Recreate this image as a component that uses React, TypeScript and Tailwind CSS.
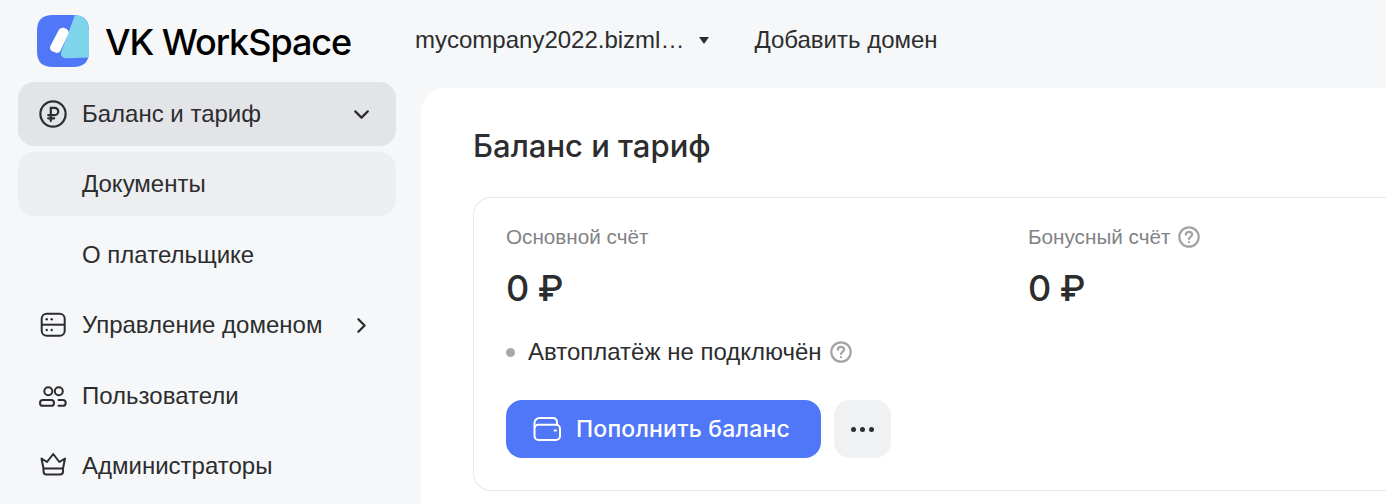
import { ChevronDown, ChevronRight } from "lucide-react";

const QuestionIcon = () => (
  <svg width="22" height="22" viewBox="0 0 22 22" fill="none" stroke="#a3a3a6" strokeWidth="2.2" strokeLinecap="round">
    <circle cx="11" cy="11" r="9.7" />
    <path d="M7.9 8.7c0-1.8 1.3-2.9 3.1-2.9s3.1 1.1 3.1 2.7c0 2.3-3.1 2.3-3.1 4.4" />
    <circle cx="11" cy="16.2" r="0.5" fill="#a3a3a6" strokeWidth="1.2" />
  </svg>
);

const Logo = () => (
  <svg width="52" height="52" viewBox="0 0 52 52" fill="none">
    <path d="M16 0H36C47 0 52 5 52 16V36C52 47 47 52 36 52H16C5 52 0 47 0 36V16C0 5 5 0 16 0Z" fill="#5077f7" />
    <path d="M38 0C47 .5 52 6 52 16V36C52 38 51.8 40 51.4 42.5L29 43.2C25 43.3 22.8 39.6 24.6 36L38 0Z" fill="#7fd6ec" />
    <path d="M21.5 15.5C23 13 25.5 12.2 27.8 13.2L29.5 14C31.5 15 32.2 17.2 31.2 19.2L23.6 35.6C22.7 37.6 20.4 38.4 18.4 37.6L15.2 36.2C13.2 35.2 12.4 33 13.4 31L21.5 15.5Z" fill="#fff" />
  </svg>
);

const RubleIcon = () => (
  <svg width="28" height="28" viewBox="0 0 28 28" fill="none" stroke="#2c2d2e" strokeWidth="2.2">
    <circle cx="14" cy="14" r="12.6" />
    <path d="M11.8 21V7.8h3.8a3.6 3.6 0 0 1 0 7.3H9.2M9.2 18.3h6" strokeLinecap="round" />
  </svg>
);

const DomainIcon = () => (
  <svg width="28" height="28" viewBox="0 0 28 28" fill="none" stroke="#2c2d2e" strokeWidth="2">
    <rect x="2.7" y="2.7" width="23" height="22" rx="5" />
    <path d="M2.7 13.7h23" />
    <g fill="#2c2d2e" stroke="none">
      <circle cx="7.7" cy="8.3" r="1.2" />
      <circle cx="12.7" cy="8.3" r="1.2" />
      <circle cx="7.7" cy="19" r="1.2" />
      <circle cx="12.7" cy="19" r="1.2" />
    </g>
  </svg>
);

const UsersIcon = () => (
  <svg width="30" height="28" viewBox="0 0 30 28" fill="none" stroke="#2c2d2e" strokeWidth="2">
    <circle cx="10.3" cy="9.3" r="4" />
    <circle cx="20.8" cy="9.3" r="4" />
    <rect x="2" y="18" width="14" height="5.8" rx="2.9" />
    <path d="M20.5 18h4.3a2.9 2.9 0 0 1 0 5.8h-4.3" strokeLinecap="round" />
  </svg>
);

const CrownIcon = () => (
  <svg width="28" height="28" viewBox="0 0 28 28" fill="none" stroke="#2c2d2e" strokeWidth="2" strokeLinejoin="round" className="overflow-visible">
    <path d="M2.5 6.5L8 10l6.2-8 6.2 8L26 6.5 24 16.5H4.5L2.5 6.5Z" />
    <path d="M4.5 16.5V19.5a3 3 0 0 0 3 3h13.5a3 3 0 0 0 3-3V16.5" />
  </svg>
);

const WalletIcon = () => (
  <svg width="28" height="28" viewBox="0 0 28 28" fill="none" stroke="#fff" strokeWidth="2">
    <rect x="1.5" y="9.7" width="25.5" height="15.2" rx="4" />
    <path d="M1.5 13V8a5 5 0 0 1 5-5h13.5a4 4 0 0 1 4 4v3" />
    <path d="M21.5 15.5h1.5" strokeLinecap="round" />
  </svg>
);

const NavRow = ({ icon, label, arrow, className }: { icon?: React.ReactNode; label: string; arrow?: React.ReactNode; className?: string }) => (
  <div className={`flex h-16 items-center rounded-2xl pr-[22px] ${className ?? ""}`}>
    <div className="flex w-[64px] shrink-0 justify-center pl-[6px]">{icon}</div>
    <span className="flex-1 text-[24px] leading-[30px] text-[#2c2d2e]">{label}</span>
    {arrow}
  </div>
);

export default function App() {
  return (
    <div className="h-[504px] w-[1386px] overflow-hidden bg-[#f6f7f8] font-['Liberation_Sans',sans-serif]">
      <header className="flex h-[82px] items-center">
        <div className="ml-[37px] flex w-[378px] items-center">
          <Logo />
          <span className="ml-[16px] mt-[2px] font-['Inter',sans-serif] text-[36px] font-medium leading-none tracking-[-1.05px] text-black">VK WorkSpace</span>
        </div>
        <div className="mb-[2px] flex items-center">
          <span className="text-[24px] text-[#2c2d2e]">mycompany2022.bizml…</span>
          <span className="ml-[15px] h-0 w-0 border-x-[5px] border-t-[7px] border-x-transparent border-t-[#2c2d2e]" />
        </div>
        <span className="mb-[2px] ml-[45px] text-[24px] text-[#2c2d2e]">Добавить домен</span>
      </header>
      <div className="flex">
        <nav className="ml-[18px] flex w-[378px] shrink-0 flex-col gap-[6px]">
          <NavRow
            icon={<RubleIcon />}
            label="Баланс и тариф"
            arrow={<ChevronDown size={25} strokeWidth={2.2} className="text-[#2c2d2e]" />}
            className="bg-[#e3e4e8]"
          />
          <NavRow label="Документы" className="bg-[#edeef0]" />
          <NavRow label="О плательщике" className="mt-px" />
          <NavRow
            icon={<DomainIcon />}
            label="Управление доменом"
            arrow={<ChevronRight size={25} strokeWidth={2.2} className="text-[#2c2d2e]" />}
          />
          <NavRow icon={<UsersIcon />} label="Пользователи" className="mt-px" />
          <NavRow icon={<CrownIcon />} label="Администраторы" />
        </nav>
        <main className="ml-[25px] mt-[6px] h-[500px] flex-1 rounded-tl-[24px] bg-white pl-[52px] pt-[40px]">
          <h1 className="font-['Inter',sans-serif] text-[31px] font-medium leading-9 text-[#2c2d2e]">Баланс и тариф</h1>
          <section className="mt-[33px] h-[294px] rounded-l-[18px] border border-r-0 border-[#e7e8ec] pl-[32px] pt-[25px]">
            <div className="flex">
              <div className="w-[522px]">
                <div className="text-[20.7px] leading-[28px] text-[#818285]">Основной счёт</div>
                <div className="mt-[15px] font-['Inter',sans-serif] text-[36px] font-medium leading-[44px] tracking-[-0.5px] text-[#2c2d2e]">0 ₽</div>
              </div>
              <div>
                <div className="flex items-center gap-2 text-[20.7px] leading-[28px] text-[#818285]">
                  Бонусный счёт <QuestionIcon />
                </div>
                <div className="mt-[15px] font-['Inter',sans-serif] text-[36px] font-medium leading-[44px] tracking-[-0.5px] text-[#2c2d2e]">0 ₽</div>
              </div>
            </div>
            <div className="mt-[27px] flex items-center">
              <span className="h-[9px] w-[9px] rounded-full bg-[#a8a8ab]" />
              <span className="ml-[13px] text-[24px] leading-[30px] text-[#2c2d2e]">Автоплатёж не подключён</span>
              <span className="ml-2 flex"><QuestionIcon /></span>
            </div>
            <div className="mt-[33px] flex gap-[13px]">
              <button className="flex h-[58px] w-[315px] items-center rounded-2xl bg-[#5077f7] pl-[27px] text-white">
                <WalletIcon />
                <span className="ml-[15px] font-['Inter',sans-serif] text-[23px] font-medium tracking-[0.2px]">Пополнить баланс</span>
              </button>
              <button className="flex h-[58px] w-[57px] items-center justify-center gap-[4px] rounded-2xl bg-[#f0f1f3]">
                <span className="h-[5px] w-[5px] rounded-full bg-[#2c2d2e]" />
                <span className="h-[5px] w-[5px] rounded-full bg-[#2c2d2e]" />
                <span className="h-[5px] w-[5px] rounded-full bg-[#2c2d2e]" />
              </button>
            </div>
          </section>
        </main>
      </div>
    </div>
  );
}
